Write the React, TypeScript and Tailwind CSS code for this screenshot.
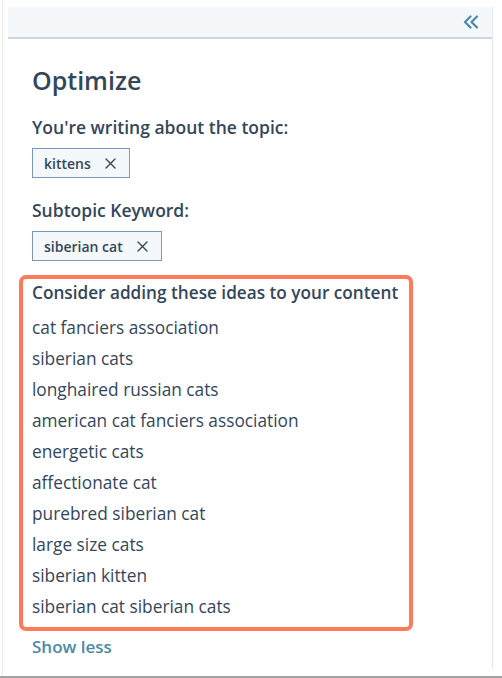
import React from 'react'

const ideas = [
  'cat fanciers association',
  'siberian cats',
  'longhaired russian cats',
  'american cat fanciers association',
  'energetic cats',
  'affectionate cat',
  'purebred siberian cat',
  'large size cats',
  'siberian kitten',
  'siberian cat siberian cats',
]

function Tag({ label }: { label: string }) {
  return (
    <div className="inline-flex items-center h-[30px] pl-[11px] pr-[13px] bg-[#f5f8fa] border border-[#7c98b6] text-[14px] font-semibold text-[#33475b]">
      <span>{label}</span>
      <svg className="ml-[14px]" width="11" height="11" viewBox="0 0 11 11" fill="none" stroke="#33475b" strokeWidth="1.4" strokeLinecap="round">
        <path d="M1 1 L10 10 M10 1 L1 10" />
      </svg>
    </div>
  )
}

export default function App() {
  return (
    <div className="h-[678px] bg-white border-b-2 border-[#a3a3a3] font-['Open_Sans',sans-serif] text-[#33475b]">
      <div className="h-full ml-[2px] border-l border-[#ececec] pl-[5px] pt-[7px] pr-[9px]">
        <div className="h-[662px] border-r border-[#e3e8ee] bg-white">
          {/* header */}
          <div className="h-[32px] bg-[#f5f8fa] border-b-2 border-[#cbd6e2] flex items-center justify-end pr-[13px]">
            <svg width="16" height="14" viewBox="0 0 16 14" fill="none" stroke="#4a8aa8" strokeWidth="2.2" strokeLinecap="round" strokeLinejoin="round">
              <path d="M7.5 1.5 L2 7 L7.5 12.5" />
              <path d="M14 1.5 L8.5 7 L14 12.5" />
            </svg>
          </div>

          <div className="pl-[24px] pt-[25px]">
            <h1 className="text-[25px] leading-[32px] font-semibold">Optimize</h1>

            <div className="mt-[20px] text-[17.5px] leading-[22px] font-semibold">You're writing about the topic:</div>
            <div className="mt-[10px] flex">
              <Tag label="kittens" />
            </div>

            <div className="mt-[21px] text-[17.5px] leading-[22px] font-semibold">Subtopic Keyword:</div>
            <div className="mt-[10px] flex">
              <Tag label="siberian cat" />
            </div>
          </div>

          <div className="ml-[11px] mt-[14px] w-[394px] border-4 border-[#ff7a59] rounded-[7px] pl-[9px] pt-[2px] pb-[5px]">
            <div className="text-[17.2px] leading-[24px] font-semibold">Consider adding these ideas to your content</div>
            <ul className="mt-[7px]">
              {ideas.map((idea) => (
                <li key={idea} className="text-[17.3px] leading-[31px]">{idea}</li>
              ))}
            </ul>
          </div>

          <div className="pl-[24px] mt-[4px]">
            <a className="text-[17px] leading-[24px] font-semibold text-[#4a8aa8] cursor-pointer">Show less</a>
          </div>
        </div>
      </div>
    </div>
  )
}
